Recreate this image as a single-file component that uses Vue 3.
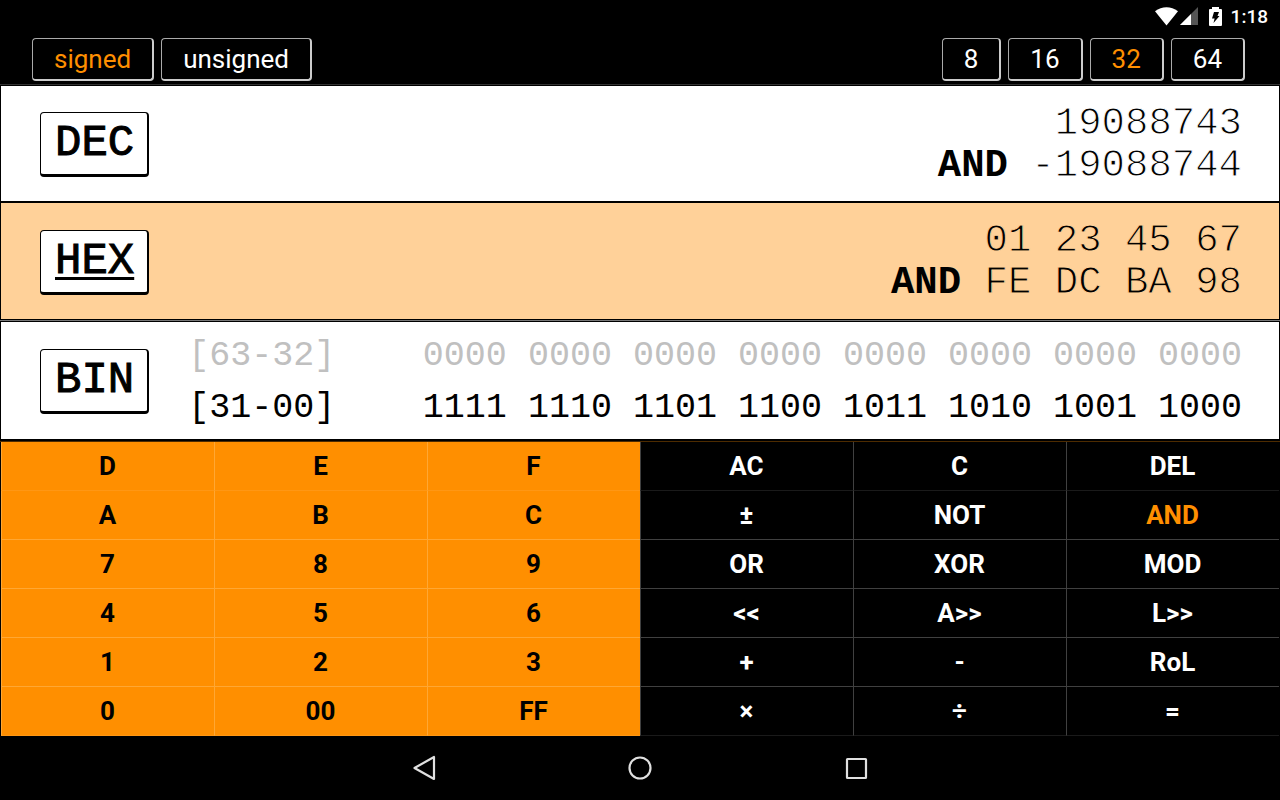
<script setup>
import { ref } from 'vue'

const signs = ['signed', 'unsigned']
const sizes = ['8', '16', '32', '64']
const sign = ref('signed')
const size = ref('32')
const base = ref('HEX')
const operator = ref('AND')

const readouts = [
  { name: 'DEC', first: '19088743', second: '-19088744' },
  { name: 'HEX', first: '01 23 45 67', second: 'FE DC BA 98' },
]
const bits = [
  { range: '[63-32]', value: '0000 0000 0000 0000 0000 0000 0000 0000', off: true },
  { range: '[31-00]', value: '1111 1110 1101 1100 1011 1010 1001 1000', off: false },
]
const keyRows = [
  ['D', 'E', 'F', 'AC', 'C', 'DEL'],
  ['A', 'B', 'C', '±', 'NOT', 'AND'],
  ['7', '8', '9', 'OR', 'XOR', 'MOD'],
  ['4', '5', '6', '<<', 'A>>', 'L>>'],
  ['1', '2', '3', '+', '-', 'RoL'],
  ['0', '00', 'FF', '×', '÷', '='],
]
</script>

<template>
  <div class="screen">
    <header class="status">
      <svg class="wifi" viewBox="0 0 23 19" aria-hidden="true">
        <path d="M0 4.2C7-1.2 16-1.2 23 4.2L11.5 18.6Z" fill="#fff" />
      </svg>
      <svg class="signal" viewBox="0 0 18 18" aria-hidden="true">
        <path d="M18 0V18H0Z" fill="#555" />
        <path d="M11 7V18H0Z" fill="#fff" />
      </svg>
      <svg class="battery" viewBox="0 0 13 19" aria-hidden="true">
        <path d="M3 0H10V2H12Q13 2 13 3V18Q13 19 12 19H1Q0 19 0 18V3Q0 2 1 2H3Z" fill="#fff" />
        <path d="M5 5H10L8.500 9H10.500L4.500 16L5.600 11.500H3Z" fill="#000" />
      </svg>
      <time>1:18</time>
    </header>

    <div class="modes">
      <div class="group">
        <button v-for="s in signs" :key="s" class="toggle" :class="{ active: s === sign }" @click="sign = s">{{ s }}</button>
      </div>
      <div class="group">
        <button v-for="s in sizes" :key="s" class="toggle" :class="{ active: s === size }" @click="size = s">{{ s }}</button>
      </div>
    </div>

    <main>
      <div class="readouts">
        <section v-for="r in readouts" :key="r.name" class="readout" :class="{ current: r.name === base }">
          <button class="base" @click="base = r.name">{{ r.name }}</button>
          <div class="values">
            <div><span class="number">{{ r.first }}</span></div>
            <div><b>{{ operator }}</b>{{ ' ' }}<span class="number">{{ r.second }}</span></div>
          </div>
        </section>
        <section class="readout binary" :class="{ current: base === 'BIN' }">
          <button class="base" @click="base = 'BIN'">BIN</button>
          <div class="bits">
            <div v-for="b in bits" :key="b.range" class="word" :class="{ off: b.off }">
              <span>{{ b.range }}</span><span>{{ b.value }}</span>
            </div>
          </div>
        </section>
      </div>

      <div class="keypad">
        <template v-for="(row, i) in keyRows" :key="i">
          <button
            v-for="(k, j) in row"
            :key="j"
            class="key"
            :class="{ digit: j < 3, faint: i === 0 || i === 5, active: j > 2 && k === operator }"
          >{{ k }}</button>
        </template>
      </div>
    </main>

    <nav class="system">
      <button aria-label="Back">
        <svg viewBox="0 0 26 28"><path d="M23 3V25L3.500 14Z" /></svg>
      </button>
      <button aria-label="Home">
        <svg viewBox="0 0 26 28"><circle cx="13" cy="14" r="10.500" /></svg>
      </button>
      <button aria-label="Overview">
        <svg viewBox="0 0 26 28"><rect x="4" y="5" width="19" height="19" rx="0.500" /></svg>
      </button>
    </nav>
  </div>
</template>

<style>
body {
  margin: 0;
  background: #000;
}
</style>

<style scoped>
.screen {
  min-height: 100vh;
  display: flex;
  flex-direction: column;
  background: #000;
  color: #fff;
  font-family: Roboto, "Liberation Sans", sans-serif;
}
button {
  margin: 0;
  padding: 0;
  border: 0;
  background: none;
  color: inherit;
  font: inherit;
  cursor: pointer;
}
.status {
  display: flex;
  justify-content: flex-end;
  align-items: center;
  height: 32px;
  padding-right: 12px;
}
.status svg {
  display: block;
}
.wifi {
  width: 23px;
  height: 19px;
}
.signal {
  width: 18px;
  height: 18px;
  margin-left: 2px;
}
.battery {
  width: 13px;
  height: 19px;
  margin: 0 9px 0 11px;
}
.status time {
  padding-top: 2px;
  font-size: 19px;
  font-weight: 500;
  line-height: 32px;
}
.modes {
  display: flex;
  justify-content: space-between;
  padding: 6px 35px 3px 32px;
}
.group {
  display: flex;
  gap: 7px;
}
.toggle {
  padding: 1px 21px 0;
  border: solid #aaa;
  border-width: 1px 2px 2px 1px;
  border-right-color: #ccc;
  border-bottom-color: #ccc;
  border-radius: 4px;
  font-size: 26px;
  line-height: 39px;
}
.active {
  color: #ff8f00;
}
main {
  flex: 1;
  display: flex;
  flex-direction: column;
  border-top: 1px solid #333;
}
.readouts {
  display: grid;
  grid-template-rows: minmax(117px, auto) minmax(118px, auto) minmax(121px, auto);
  background: #777;
  color: #000;
  font-family: "Liberation Mono", monospace;
}
.readout {
  --paper: #fff;
  display: flex;
  align-items: center;
  justify-content: space-between;
  padding: 2px 37px 0 39px;
  border: 1px solid #000;
  background: var(--paper);
}
.readout.current {
  --paper: #ffd199;
}
.readout.binary {
  margin-top: 1px;
  border-bottom-width: 2px;
}
.base {
  padding: 0 13px 0 14px;
  border: solid #000;
  border-width: 1px 2px 3px 1px;
  border-radius: 4px;
  background: #fff;
  font-size: 44px;
  line-height: 61px;
  -webkit-text-stroke: 1px #000;
}
.current .base {
  text-decoration: underline;
  text-decoration-thickness: 3px;
  text-underline-offset: 4px;
}
.values {
  font-size: 39px;
  line-height: 42px;
  text-align: right;
  white-space: pre;
}
.number {
  -webkit-text-stroke: 1px var(--paper);
}
.bits {
  flex: 1;
  margin-left: 39px;
  font-size: 35px;
  line-height: 52px;
  white-space: pre;
}
.word {
  display: flex;
  justify-content: space-between;
}
.off {
  color: #c0c0c0;
}
.keypad {
  flex: 1;
  display: grid;
  grid-template-columns: repeat(6, 1fr);
  grid-auto-rows: minmax(49px, 1fr);
  padding: 0 1px;
  border-top: 1px solid #4d2b00;
}
.key {
  padding-right: 1px;
  border: solid #404040;
  border-width: 0 0 1px 1px;
  font-size: 26px;
  font-weight: 700;
}
.key.faint {
  border-bottom-color: #1a1a1a;
}
.digit {
  border-color: #ffa733;
  background: #ff8f00;
  color: #000;
}
.digit.faint {
  border-bottom-color: #ff9714;
}
.system {
  display: flex;
  justify-content: center;
  height: 64px;
}
.system button {
  width: 216px;
  display: flex;
  align-items: center;
  justify-content: center;
}
.system svg {
  width: 26px;
  height: 28px;
  fill: none;
  stroke: #e0e0e0;
  stroke-width: 2.200;
  stroke-linejoin: round;
}
</style>
